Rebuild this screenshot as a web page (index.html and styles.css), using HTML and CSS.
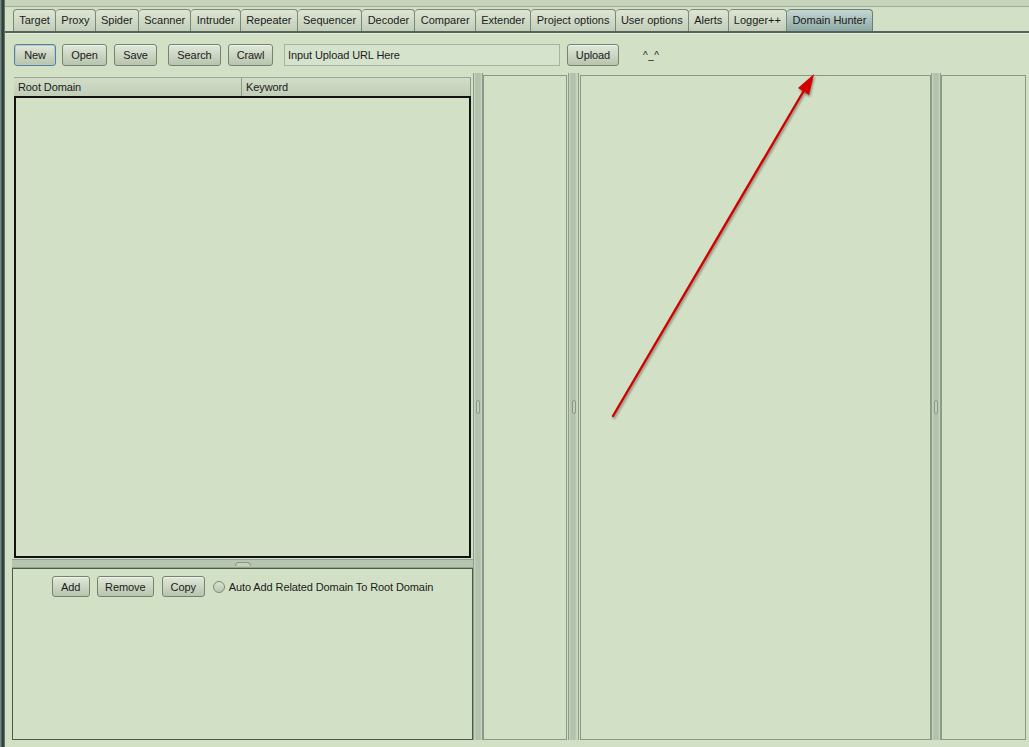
FILE: index.html
```html
<!DOCTYPE html>
<html>
<head>
<meta charset="utf-8">
<title>Domain Hunter</title>
<link rel="stylesheet" href="styles.css">
</head>
<body>
<div class="app">
  <div class="edge"></div>
  <div class="main">
    <div class="menustrip"></div>
    <div class="tabs">
      <div class="tab">Target</div>
      <div class="tab">Proxy</div>
      <div class="tab">Spider</div>
      <div class="tab">Scanner</div>
      <div class="tab">Intruder</div>
      <div class="tab">Repeater</div>
      <div class="tab">Sequencer</div>
      <div class="tab">Decoder</div>
      <div class="tab">Comparer</div>
      <div class="tab">Extender</div>
      <div class="tab">Project options</div>
      <div class="tab">User options</div>
      <div class="tab">Alerts</div>
      <div class="tab">Logger++</div>
      <div class="tab active">Domain Hunter</div>
    </div>
    <div class="tabline"></div>
    <div class="toolbar">
      <button class="btn focus w42">New</button>
      <button class="btn w45 gap6">Open</button>
      <button class="btn w43 gap7">Save</button>
      <button class="btn w53 gap11">Search</button>
      <button class="btn w45 gap7">Crawl</button>
      <input class="urlinput" type="text" value="Input Upload URL Here">
      <button class="btn w52 gap7">Upload</button>
      <span class="smiley">^_^</span>
    </div>
    <div class="workspace">
      <div class="leftcol">
        <div class="table">
          <div class="thead">
            <div class="th first">Root Domain</div>
            <div class="th">Keyword</div>
          </div>
          <div class="tbody"></div>
        </div>
        <div class="hsplit"><span class="hgrip"></span></div>
        <div class="bottompanel">
          <div class="btnrow">
            <button class="btn small w38">Add</button>
            <button class="btn small w57 gap7">Remove</button>
            <button class="btn small w43 gap8">Copy</button>
            <label class="radio"><span class="radiodot"></span>Auto Add Related Domain To Root Domain</label>
          </div>
        </div>
      </div>
      <div class="vsplit"><span class="vgrip"></span></div>
      <div class="panel p2"></div>
      <div class="vsplit wide"><span class="vgrip"></span></div>
      <div class="panel p3"></div>
      <div class="vsplit"><span class="vgrip"></span></div>
      <div class="panel p4"></div>
    </div>
  </div>
</div>
<svg class="arrow" width="1029" height="747" viewBox="0 0 1029 747">
  <line x1="613" y1="416" x2="806" y2="87" stroke="#d40000" stroke-width="2.4" stroke-linecap="round"/>
  <polygon points="814,74 798,88 809,95" fill="#d40000"/>
</svg>
</body>
</html>
```
FILE: styles.css
```css
html, body {
  margin: 0;
  padding: 0;
}
body {
  width: 1029px;
  height: 747px;
  overflow: hidden;
  position: relative;
  background: #d2e1c6;
  font-family: "Liberation Sans", Arial, sans-serif;
  font-size: 11px;
  letter-spacing: -0.1px;
  color: #1b1b1b;
}
.app {
  display: flex;
  height: 747px;
}
.edge {
  width: 5px;
  flex: none;
  background: linear-gradient(to right, #6e8a84 0, #6e8a84 1px, #2d3833 2px, #3c4741 4px, #8d9e8d 5px);
}
.main {
  flex: 1;
  display: flex;
  flex-direction: column;
  min-width: 0;
}
.menustrip {
  height: 6px;
  background: #c7d4bc;
  border-bottom: 1px solid #9fad9b;
}
.tabs {
  display: flex;
  margin: 2px 0 0 8px;
  height: 22px;
}
.tab {
  padding: 0 5.25px;
  height: 22px;
  box-sizing: border-box;
  line-height: 21px;
  letter-spacing: 0;
  border: 1px solid #7b8a78;
  border-bottom: none;
  border-left: none;
  border-radius: 4px 4px 0 0;
  background: linear-gradient(#dde6d4, #c3ceb9);
  white-space: nowrap;
}
.tab:first-child {
  border-left: 1px solid #7b8a78;
}
.tab.active {
  background: linear-gradient(#c6d6d0, #8da8a5);
  border-color: #6d7f7b;
}
.tabline {
  height: 2px;
  background: #55635a;
  border-bottom: 1px solid #e4ecdc;
}
.toolbar {
  display: flex;
  align-items: center;
  height: 22px;
  margin: 10px 0 0 9px;
}
.btn {
  height: 22px;
  box-sizing: border-box;
  padding: 0;
  flex: none;
  border: 1px solid #76846f;
  border-radius: 3px;
  background: linear-gradient(#e1e8da, #b7c4ad);
  box-shadow: inset 0 1px 0 #eef3ea;
  font-family: "Liberation Sans", Arial, sans-serif;
  font-size: 11px;
  letter-spacing: -0.1px;
  color: #1b1b1b;
}
.btn.focus {
  border-color: #5b7f95;
  box-shadow: inset 0 0 0 1px #b3c9d2;
}
.w38 { width: 38px; }
.w42 { width: 42px; }
.w43 { width: 43px; }
.w45 { width: 45px; }
.w52 { width: 52px; }
.w53 { width: 53px; }
.w57 { width: 57px; }
.gap6 { margin-left: 6px; }
.gap7 { margin-left: 7px; }
.gap8 { margin-left: 8px; }
.gap11 { margin-left: 11px; }
.urlinput {
  width: 276px;
  height: 22px;
  box-sizing: border-box;
  margin-left: 11px;
  padding: 0 3px;
  border: 1px solid #a6b49f;
  background: #d6e3cc;
  font-family: "Liberation Sans", Arial, sans-serif;
  font-size: 11px;
  letter-spacing: -0.1px;
  color: #1b1b1b;
  outline: none;
}
.smiley {
  margin-left: 24px;
  font-size: 10px;
  letter-spacing: 0.5px;
}
.workspace {
  display: flex;
  height: 666px;
  margin: 9px 0 0 7px;
}
.leftcol {
  width: 461px;
  flex: none;
  display: flex;
  flex-direction: column;
}
.table {
  flex: 1;
  display: flex;
  flex-direction: column;
  margin: 2px 2px 0 2px;
}
.thead {
  height: 19px;
  display: flex;
  background: linear-gradient(#d2ddc8, #c1cdb7);
  border-top: 1px solid #9aa796;
  border-right: 1px solid #8e9b8a;
  box-sizing: border-box;
}
.th {
  padding-left: 4px;
  line-height: 18px;
}
.th.first {
  width: 223px;
  border-right: 1px solid #8e9b8a;
}
.tbody {
  flex: 1;
  border: 2px solid #111;
  background: #d2e1c6;
}
.hsplit {
  height: 9px;
  box-sizing: border-box;
  margin-top: 1px;
  background: #b5c5b0;
  border-top: 1px solid #93a28f;
  border-bottom: 1px solid #93a28f;
  display: flex;
  justify-content: center;
  align-items: center;
}
.hgrip {
  width: 14px;
  height: 3px;
  border: 1px solid #8a9886;
  border-bottom: none;
  border-radius: 4px 4px 0 0;
  background: #c2d0bc;
}
.bottompanel {
  height: 172px;
  box-sizing: border-box;
  border: 1px solid #4d5a4d;
  margin-bottom: 1px;
}
.btnrow {
  display: flex;
  justify-content: center;
  align-items: center;
  margin-top: 7px;
}
.btn.small {
  height: 21px;
}
.radio {
  display: flex;
  align-items: center;
  gap: 4px;
  margin-left: 8px;
  white-space: nowrap;
}
.radiodot {
  width: 10px;
  height: 10px;
  border-radius: 50%;
  border: 1px solid #7d8a79;
  background: linear-gradient(#d9e3d1, #b9c6b1);
}
.vsplit {
  width: 8px;
  flex: none;
  margin-top: -2px;
  margin-bottom: 1px;
  background: linear-gradient(to right, #c9d7c3 0, #b2c2ad 2px, #b2c2ad 6px, #c9d7c3 8px);
  border-left: 1px solid #8e9d8a;
  border-right: 1px solid #8e9d8a;
  display: flex;
  align-items: center;
  justify-content: center;
}
.vsplit.wide {
  width: 9px;
  margin-left: 1px;
  margin-right: 1px;
}
.vgrip {
  width: 2px;
  height: 12px;
  border: 1px solid #8a9886;
  border-radius: 2px;
  background: #c0ceba;
}
.panel {
  box-sizing: border-box;
  border: 1px solid #8a9986;
  margin-bottom: 1px;
  background: #d2e1c6;
}
.p2 { width: 84px; flex: none; }
.p3 { width: 351px; flex: none; }
.p4 { width: 85px; flex: none; }
.arrow {
  position: absolute;
  left: 0;
  top: 0;
  pointer-events: none;
  filter: drop-shadow(1px 2px 1px rgba(40, 40, 30, 0.45));
}
```
